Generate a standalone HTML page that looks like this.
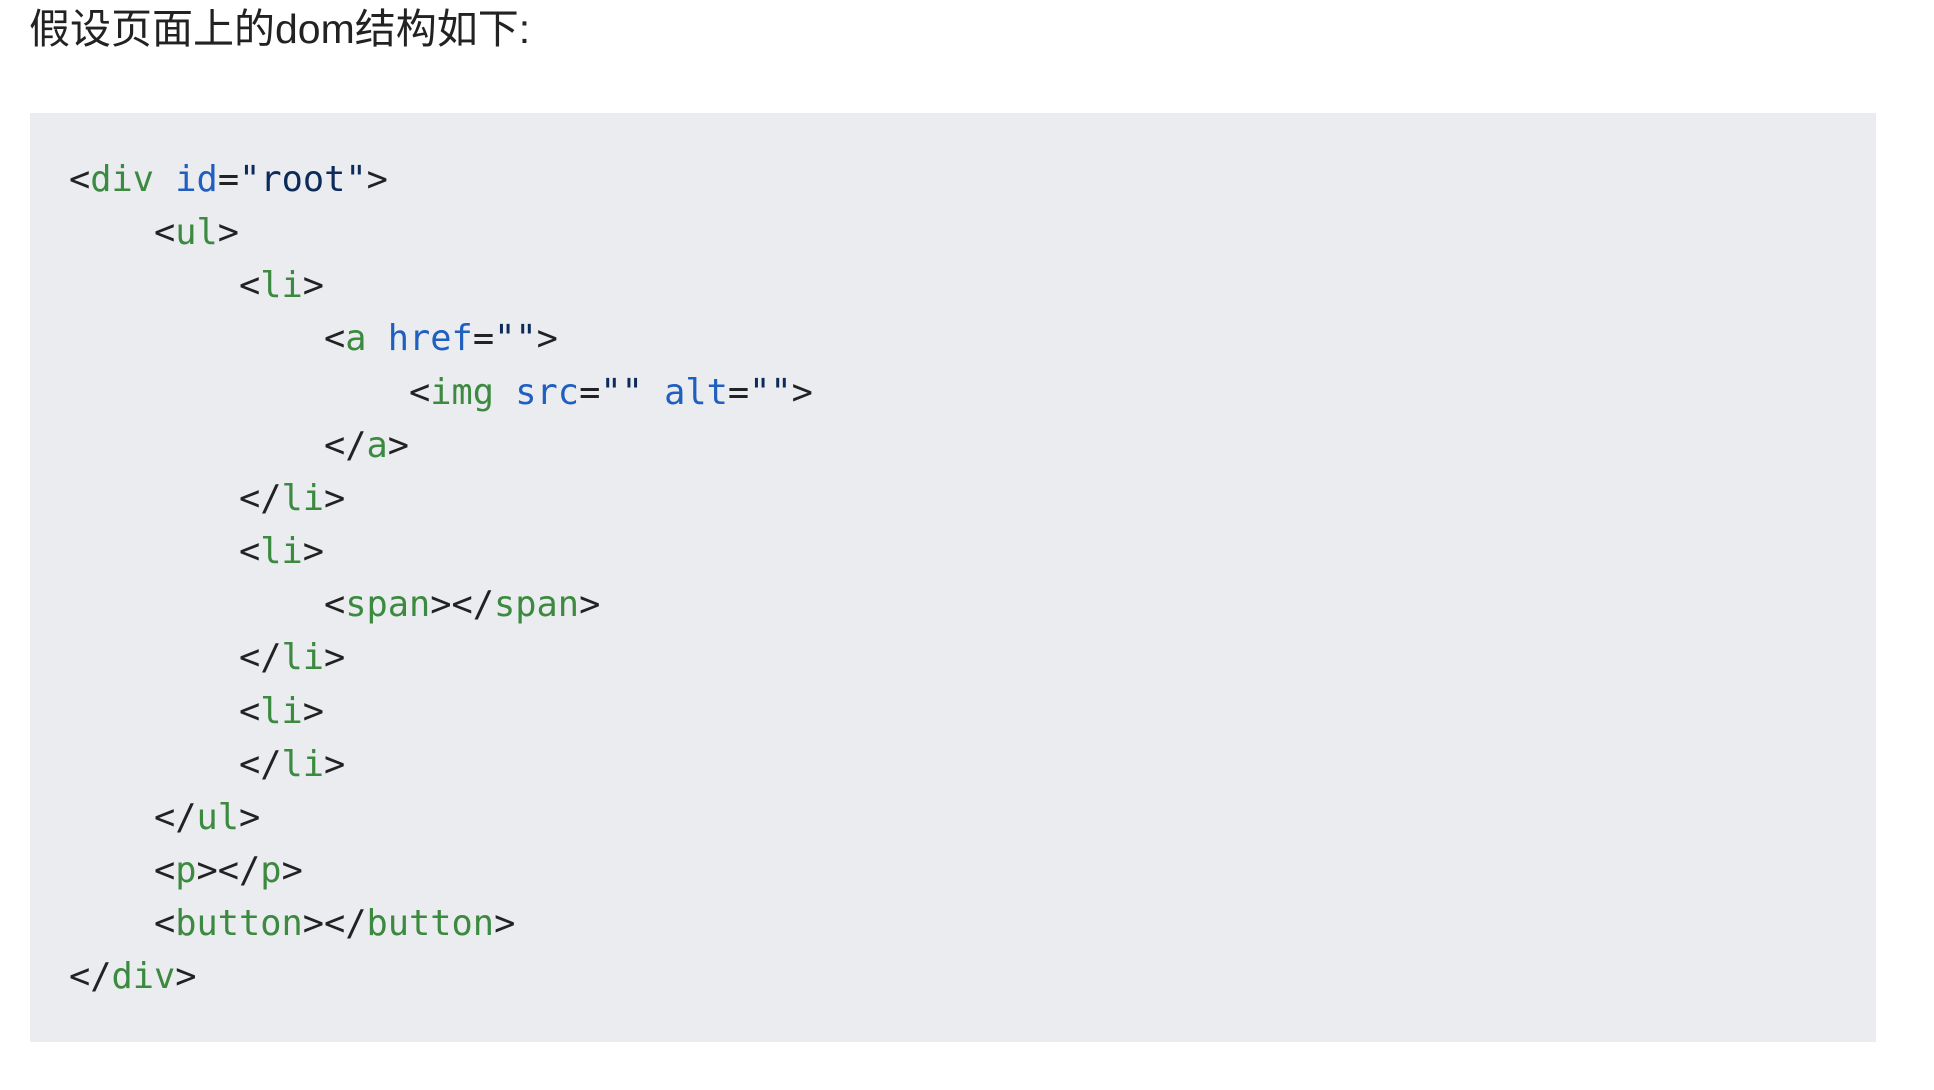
<!DOCTYPE html>
<html><head><meta charset="utf-8"><style>
html,body{margin:0;padding:0;background:#fff;width:1934px;height:1090px;overflow:hidden}
h1{position:absolute;left:29px;top:1px;margin:0;font:400 41px/56px "Liberation Sans","Noto Sans CJK SC",sans-serif;color:#222}
.code{position:absolute;left:30px;top:113px;width:1871px;height:943px;background:#ebecf0}
.code{width:1846px;height:929px}
pre{position:absolute;left:39px;top:40px;margin:0;font:35.3px/53.15px "DejaVu Sans Mono",monospace;color:#222}
.t{color:#3b8a3f}.a{color:#1f5fbf}.s{color:#0d2b5a}
</style></head><body>
<h1>假设页面上的dom结构如下:</h1>
<div class="code"><pre>&lt;<span class="t">div</span> <span class="a">id</span>=<span class="s">"root"</span>&gt;
    &lt;<span class="t">ul</span>&gt;
        &lt;<span class="t">li</span>&gt;
            &lt;<span class="t">a</span> <span class="a">href</span>=<span class="s">""</span>&gt;
                &lt;<span class="t">img</span> <span class="a">src</span>=<span class="s">""</span> <span class="a">alt</span>=<span class="s">""</span>&gt;
            &lt;/<span class="t">a</span>&gt;
        &lt;/<span class="t">li</span>&gt;
        &lt;<span class="t">li</span>&gt;
            &lt;<span class="t">span</span>&gt;&lt;/<span class="t">span</span>&gt;
        &lt;/<span class="t">li</span>&gt;
        &lt;<span class="t">li</span>&gt;
        &lt;/<span class="t">li</span>&gt;
    &lt;/<span class="t">ul</span>&gt;
    &lt;<span class="t">p</span>&gt;&lt;/<span class="t">p</span>&gt;
    &lt;<span class="t">button</span>&gt;&lt;/<span class="t">button</span>&gt;
&lt;/<span class="t">div</span>&gt;</pre></div>
</body></html>
